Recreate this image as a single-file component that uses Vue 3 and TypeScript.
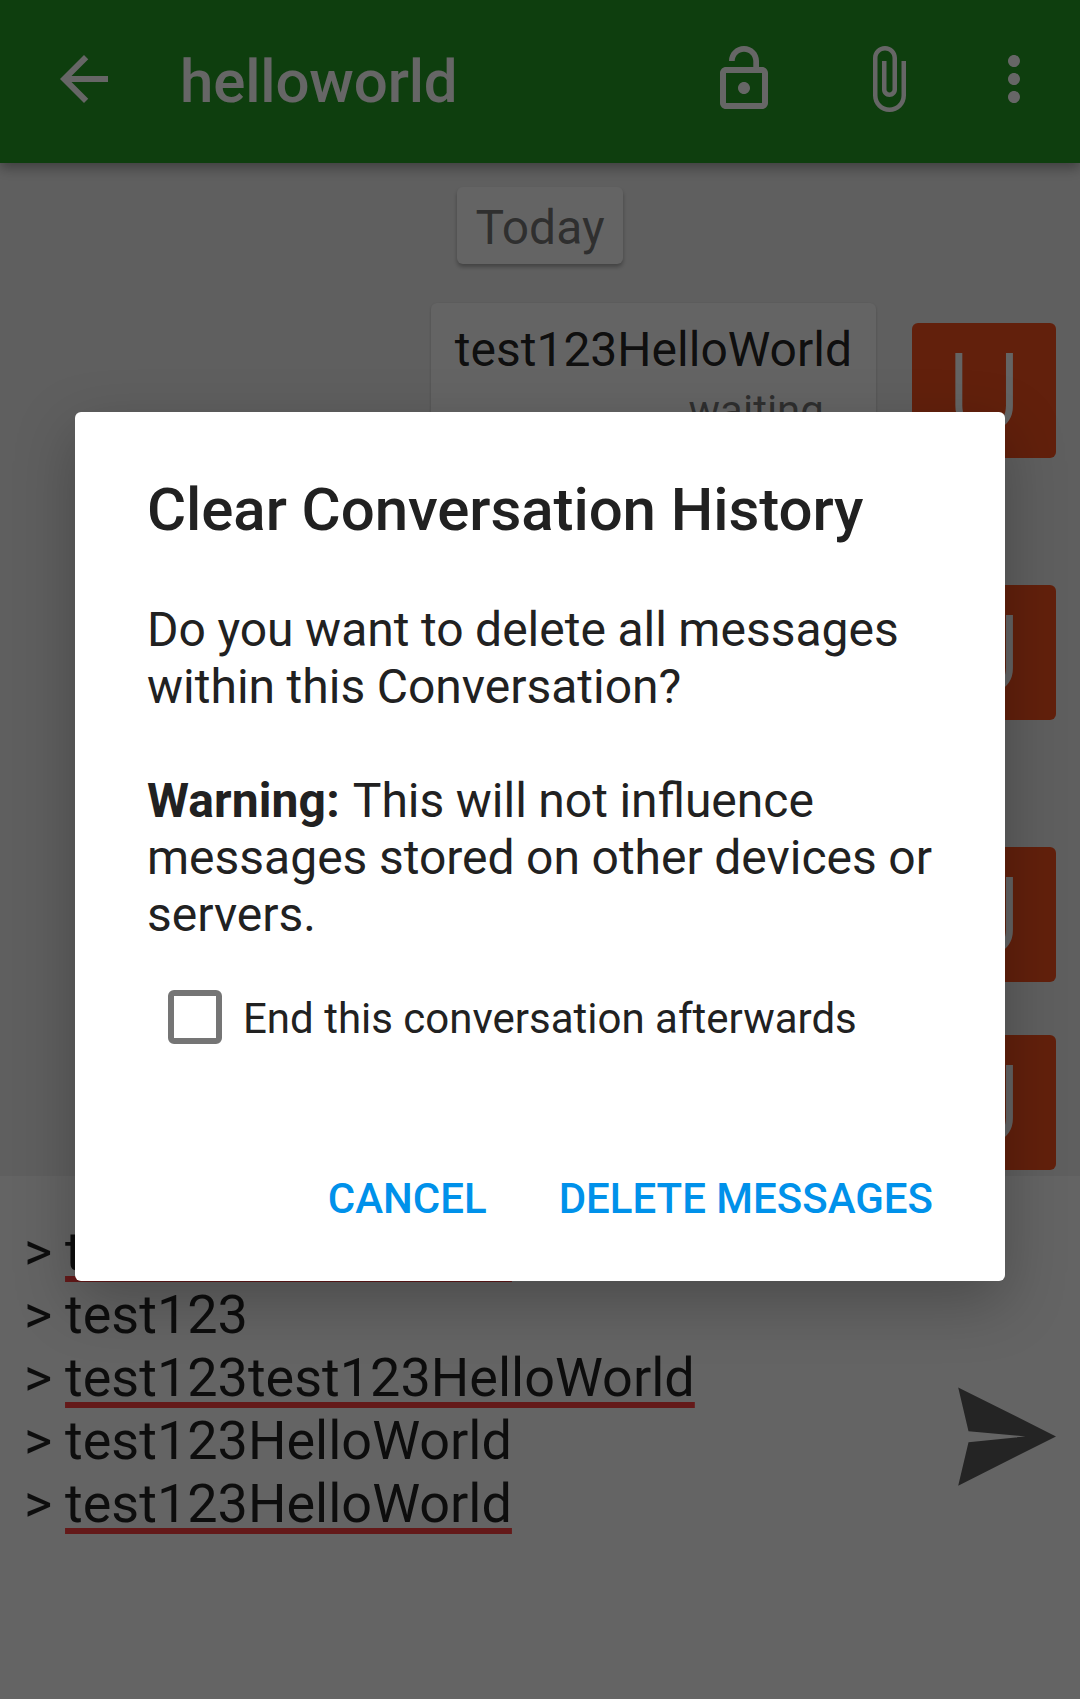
<script setup lang="ts">
interface Message {
  id: number
  height: number
  body?: string
  status?: string
}
interface DraftLine {
  word: string
  flagged: boolean
}

const contact = 'helloworld'

const messages: Message[] = [
  { id: 1, height: 262, body: 'test123HelloWorld', status: 'waiting…' },
  { id: 2, height: 262 },
  { id: 3, height: 188 },
  { id: 4, height: 161 },
]

const draft: DraftLine[] = [
  { word: 'test123HelloWorld', flagged: true },
  { word: 'test123', flagged: false },
  { word: 'test123test123HelloWorld', flagged: true },
  { word: 'test123HelloWorld', flagged: false },
  { word: 'test123HelloWorld', flagged: true },
]
</script>

<template>
  <div class="screen">
    <header class="toolbar">
      <svg class="icon back" viewBox="0 0 24 24"><path d="M20 11H7.83l5.59-5.59L12 4l-8 8 8 8 1.41-1.41L7.83 13H20v-2z" /></svg>
      <h1 class="contact">{{ contact }}</h1>
      <svg class="icon lock" viewBox="0 0 24 24"><path d="M12 17c1.1 0 2-.9 2-2s-.9-2-2-2-2 .9-2 2 .9 2 2 2zm6-9h-1V6c0-2.76-2.24-5-5-5S7 3.24 7 6h1.9c0-1.71 1.39-3.1 3.1-3.1 1.71 0 3.1 1.39 3.1 3.1v2H6c-1.1 0-2 .9-2 2v10c0 1.1.9 2 2 2h12c1.1 0 2-.9 2-2V10c0-1.1-.9-2-2-2zm0 12H6V10h12v10z" /></svg>
      <svg class="icon clip" viewBox="0 0 24 24"><path d="M16.5 6v11.5c0 2.21-1.79 4-4 4s-4-1.79-4-4V5c0-1.38 1.12-2.5 2.5-2.5s2.5 1.12 2.5 2.5v10.5c0 .55-.45 1-1 1s-1-.45-1-1V6H10v9.5c0 1.38 1.12 2.5 2.5 2.5s2.5-1.12 2.5-2.5V5c0-2.21-1.79-4-4-4S7 2.79 7 5v12.5c0 3.04 2.46 5.5 5.5 5.5s5.5-2.46 5.5-5.5V6h-1.5z" /></svg>
      <svg class="icon more" viewBox="0 0 24 24"><path d="M12 8c1.1 0 2-.9 2-2s-.9-2-2-2-2 .9-2 2 .9 2 2 2zm0 2c-1.1 0-2 .9-2 2s.9 2 2 2 2-.9 2-2-.9-2-2-2zm0 6c-1.1 0-2 .9-2 2s.9 2 2 2 2-.9 2-2-.9-2-2-2z" /></svg>
    </header>

    <main class="chat">
      <div class="date">Today</div>
      <div v-for="m in messages" :key="m.id" class="row" :style="{ height: m.height + 'px' }">
        <div v-if="m.body" class="bubble">
          <div class="body">{{ m.body }}</div>
          <div class="status">{{ m.status }}</div>
        </div>
        <div class="avatar"><div class="letter">U</div></div>
      </div>
    </main>

    <footer class="composer">
      <div class="draft">
        <div v-for="(line, i) in draft" :key="i" class="line">&gt; <span :class="{ flagged: line.flagged }">{{ line.word }}</span></div>
      </div>
      <svg class="send" viewBox="0 0 98 99"><path d="M0.2 0.4 98 49.4 0.2 98.8 10.5 55.2 67.5 49.4 10.5 44.2z" /></svg>
    </footer>

    <div class="scrim">
      <section class="dialog">
        <h2 class="title">Clear Conversation History</h2>
        <p class="text">Do you want to delete all messages within this Conversation?</p>
        <p class="text"><b class="warning">Warning:</b> <span>This will not influence</span> <span>messages stored on other devices or servers.</span></p>
        <div class="option">
          <span class="box"></span>
          <span class="label">End this conversation afterwards</span>
        </div>
        <div class="actions">
          <span class="action">CANCEL</span>
          <span class="action">DELETE MESSAGES</span>
        </div>
      </section>
    </div>
  </div>
</template>

<style>
body {
  margin: 0;
}
</style>

<style scoped>
.screen {
  position: relative;
  display: flex;
  flex-direction: column;
  width: 1080px;
  height: 1699px;
  overflow: hidden;
  background: #fafafa;
  font-family: Roboto, "Liberation Sans", sans-serif;
}
.toolbar {
  position: relative;
  z-index: 1;
  box-sizing: border-box;
  flex: none;
  display: flex;
  align-items: flex-start;
  height: 163px;
  padding: 43px 30px 0 48px;
  background: #259b24;
  box-shadow: 0 5px 12px rgba(0, 0, 0, 0.34);
}
.icon {
  flex: none;
  width: 72px;
  height: 72px;
  fill: #fff;
}
.contact {
  flex: 1;
  margin: 4px 0 0 60px;
  font-size: 60px;
  line-height: 70px;
  font-weight: 500;
  letter-spacing: -0.15px;
  color: #fff;
}
.clip {
  margin-left: 72px;
}
.more {
  margin-left: 54px;
}
.chat {
  box-sizing: border-box;
  flex: none;
  display: flex;
  flex-direction: column;
  height: 1013px;
  padding-top: 24px;
  background: #eee;
  overflow: hidden;
}
.date {
  flex: none;
  align-self: center;
  box-sizing: border-box;
  height: 77px;
  margin-bottom: 39px;
  padding: 12px 18px 0;
  border-radius: 6px;
  background: #fafafa;
  box-shadow: 0 3px 4px rgba(0, 0, 0, 0.3);
  font-size: 48px;
  line-height: 57px;
  color: rgba(0, 0, 0, 0.54);
}
.row {
  flex: none;
  display: flex;
  justify-content: flex-end;
  align-items: flex-start;
  padding-right: 24px;
}
.bubble {
  box-sizing: border-box;
  height: 150px;
  margin-right: 36px;
  padding: 18px 24px 0;
  border-radius: 6px;
  background: #fafafa;
  box-shadow: 0 1px 3px rgba(0, 0, 0, 0.2);
}
.body {
  font-size: 48px;
  line-height: 57px;
  color: rgba(0, 0, 0, 0.87);
}
.status {
  margin-top: 8px;
  font-size: 42px;
  line-height: 49px;
  text-align: right;
  color: rgba(0, 0, 0, 0.54);
}
.avatar {
  width: 144px;
  height: 135px;
  margin-top: 20px;
  border-radius: 6px;
  background: #f4511e;
}
.letter {
  font-size: 115px;
  line-height: 145px;
  font-weight: 300;
  text-align: center;
  color: #fafafa;
  transform: scaleY(0.95);
  transform-origin: 50% 30px;
}
.composer {
  flex: 1;
  box-sizing: border-box;
  display: flex;
  justify-content: space-between;
  align-items: flex-start;
  padding: 44px 24px 0;
}
.line {
  height: 63px;
  font-size: 54px;
  line-height: 63px;
  color: rgba(0, 0, 0, 0.87);
  word-spacing: -0.6px;
  white-space: nowrap;
}
.flagged {
  text-decoration: underline solid #fa4040 6px;
  text-underline-offset: 6px;
  text-decoration-skip-ink: none;
}
.send {
  flex: none;
  width: 98px;
  height: 99px;
  margin-top: 167px;
  fill: #5a5a5a;
}
.scrim {
  position: absolute;
  inset: 0;
  z-index: 2;
  display: flex;
  justify-content: center;
  align-items: flex-start;
  padding-top: 412px;
  background: rgba(0, 0, 0, 0.6);
}
.dialog {
  box-sizing: border-box;
  width: 930px;
  height: 869px;
  padding: 63px 72px 0;
  border-radius: 6px;
  background: #fff;
  color: #212121;
  box-shadow: 0 20px 60px rgba(0, 0, 0, 0.25);
}
.title {
  margin: 0 0 56px;
  font-size: 60px;
  line-height: 70px;
  font-weight: 500;
  letter-spacing: -0.08px;
  white-space: nowrap;
}
.text {
  margin: 0 -8px 57px 0;
  font-size: 48px;
  line-height: 57px;
  word-spacing: -0.4px;
}
.warning {
  margin-right: 2.4px;
  letter-spacing: 0.1px;
}
.option {
  display: flex;
  align-items: center;
  height: 54px;
  margin: -10px 0 0 21px;
}
.box {
  box-sizing: border-box;
  width: 54px;
  height: 54px;
  border: 6px solid #757575;
  border-radius: 6px;
}
.label {
  margin-left: 21px;
  padding-top: 3px;
  font-size: 42px;
  line-height: 50px;
  white-space: nowrap;
}
.actions {
  display: flex;
  justify-content: flex-end;
  gap: 72px;
  margin-top: 130px;
}
.action {
  font-size: 42px;
  line-height: 50px;
  font-weight: 500;
  color: #0091ea;
}
</style>
